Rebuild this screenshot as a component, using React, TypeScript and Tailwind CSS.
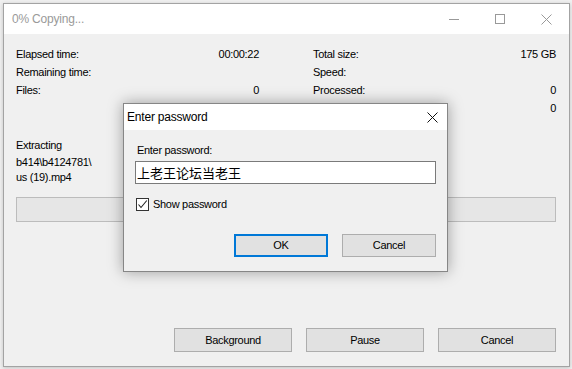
import { useState } from "react";

function StatRow({ label, value }: { label: string; value?: string }) {
  return (
    <div className="flex h-[18px] items-center justify-between">
      <span>{label}</span>
      <span>{value}</span>
    </div>
  );
}

function WinButton({ label, wide }: { label: string; wide?: boolean }) {
  return (
    <button
      className={
        "flex h-[24px] items-center justify-center border border-[#adadad] bg-[#e1e1e1] text-black " +
        (wide ? "w-[118px]" : "w-[94px]")
      }
    >
      {label}
    </button>
  );
}

function PasswordDialog() {
  const [password, setPassword] = useState("上老王论坛当老王");
  const [show, setShow] = useState(true);

  return (
    <div className="absolute left-[123px] top-[103px] flex h-[169px] w-[325px] flex-col border border-[#868686] bg-[#f0f0f0] shadow-[0_0_14px_rgba(0,0,0,0.35)]">
      {/* title */}
      <div className="flex h-[26px] items-center justify-between bg-white pl-[3px] text-[12px] tracking-[-0.2px] text-black">
        <span>Enter password</span>
        <div className="flex h-full w-[30px] items-center justify-center">
          <svg width="11" height="11" viewBox="0 0 11 11">
            <path d="M0.5 0.5 L10.5 10.5 M10.5 0.5 L0.5 10.5" stroke="#111" strokeWidth="1" />
          </svg>
        </div>
      </div>

      {/* body */}
      <div className="flex flex-1 flex-col px-[11px] pt-[13px]">
        <div className="flex h-[14px] items-center pl-[2px]">Enter password:</div>
        <input
          className="mt-[4px] h-[23px] w-full border border-[#7a7a7a] bg-white px-[1px] font-['Liberation_Sans','Noto_Sans_CJK_SC',sans-serif] text-[13px] tracking-normal text-black outline-none"
          type={show ? "text" : "password"}
          value={password}
          onChange={(e) => setPassword(e.target.value)}
        />
        <label className="mt-[14px] flex h-[13px] items-center gap-[4px] pl-[1px]">
          <span
            className="flex h-[13px] w-[13px] items-center justify-center border border-[#333] bg-white"
            onClick={() => setShow(!show)}
          >
            {show && (
              <svg width="11" height="11" viewBox="0 0 11 11">
                <path d="M1.5 5.5 L4 8.5 L9.8 1.5" fill="none" stroke="#222" strokeWidth="1.1" />
              </svg>
            )}
          </span>
          <span>Show password</span>
        </label>
        <div className="mt-[23px] flex justify-end gap-[14px]">
          <button className="flex h-[23px] w-[94px] items-center justify-center border-2 border-[#0078d7] bg-[#e1e1e1] text-black">
            OK
          </button>
          <button className="flex h-[23px] w-[94px] items-center justify-center border border-[#adadad] bg-[#e1e1e1] text-black">
            Cancel
          </button>
        </div>
      </div>
    </div>
  );
}

export default function App() {
  return (
    <div className="relative h-[369px] w-[572px] overflow-hidden bg-[#f0f0f0] font-['Liberation_Sans',sans-serif] text-[11px] tracking-[-0.3px] text-black">
      {/* copy window */}
      <div className="ml-[3px] mt-[3px] flex h-[364px] w-[567px] flex-col border border-[#a3a3a3] shadow-[0_1px_4px_rgba(0,0,0,0.2)]">
        <div className="flex h-[30px] items-center justify-between bg-white">
          <span className="pl-[8px] text-[12px] tracking-[-0.2px] text-[#9a9a9a]">0% Copying...</span>
          <div className="flex h-full">
            <div className="flex w-[46px] items-center justify-center">
              <svg width="10" height="10" viewBox="0 0 10 10">
                <path d="M0 5.5 H10" stroke="#999" strokeWidth="1" />
              </svg>
            </div>
            <div className="flex w-[46px] items-center justify-center">
              <svg width="10" height="10" viewBox="0 0 10 10">
                <rect x="0.5" y="0.5" width="9" height="9" fill="none" stroke="#999" strokeWidth="1" />
              </svg>
            </div>
            <div className="flex w-[46px] items-center justify-center">
              <svg width="11" height="11" viewBox="0 0 11 11">
                <path d="M0.5 0.5 L10.5 10.5 M10.5 0.5 L0.5 10.5" stroke="#999" strokeWidth="1" />
              </svg>
            </div>
          </div>
        </div>

        <div className="flex flex-1 flex-col bg-[#f0f0f0] pb-[14px] pl-[12px] pr-[13px] pt-[11px]">
          <div className="grid grid-cols-2 gap-x-[54px]">
            <div>
              <StatRow label="Elapsed time:" value="00:00:22" />
              <StatRow label="Remaining time:" />
              <StatRow label="Files:" value="0" />
            </div>
            <div>
              <StatRow label="Total size:" value="175 GB" />
              <StatRow label="Speed:" />
              <StatRow label="Processed:" value="0" />
              <StatRow label="Compression ratio:" value="0" />
            </div>
          </div>

          <div className="mt-[19px] flex h-[18px] items-center">Extracting</div>
          <div className="mt-[1px] leading-[15px]">
            <div>b414\b4124781\</div>
            <div>us (19).mp4</div>
          </div>

          <div className="mt-[12px] h-[25px] w-full border border-[#bcbcbc] bg-[#e6e6e6]" />

          <div className="mt-auto flex justify-end gap-[14px]">
            <WinButton label="Background" wide />
            <WinButton label="Pause" wide />
            <WinButton label="Cancel" wide />
          </div>
        </div>
      </div>

      <PasswordDialog />
    </div>
  );
}
